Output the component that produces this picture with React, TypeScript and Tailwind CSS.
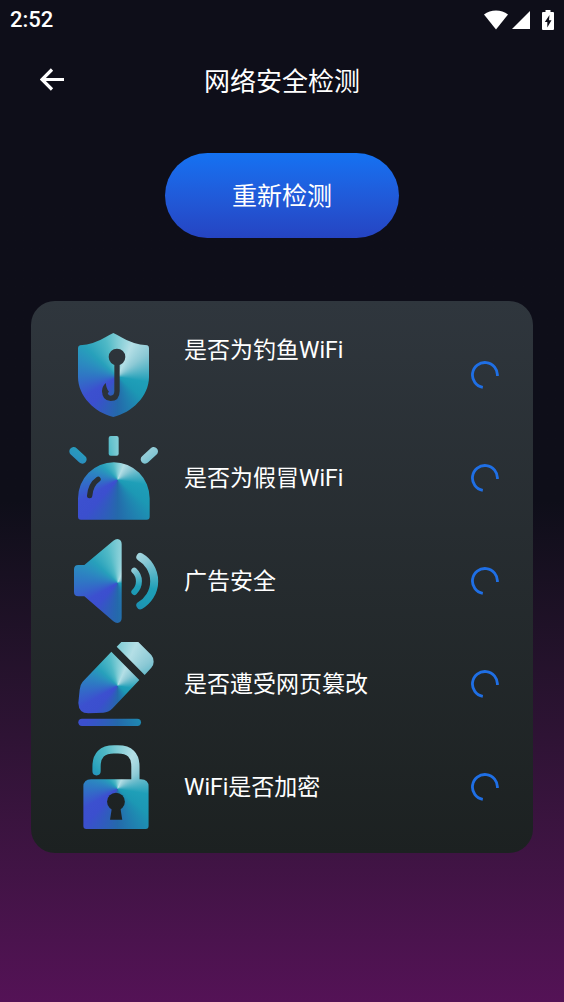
import React from 'react';

interface IconProps {
  id: string;
  viewBox: string;
  children: React.ReactNode;
}

// Children are drawn as a mask over a shared conic gradient (white = visible, black = cut out)
const GradientIcon: React.FC<IconProps> = ({ id, viewBox, children }) => {
  const [x, y, width, height] = viewBox.split(' ').map(Number);

  return (
    <svg className="w-[90px] h-[84px] shrink-0" viewBox={viewBox} fill="none" aria-hidden="true">
      <mask id={id} maskUnits="userSpaceOnUse" x={x} y={y} width={width} height={height}>
        {children}
      </mask>
      <g mask={`url(#${id})`}>
        <foreignObject x={x} y={y} width={width} height={height}>
          <div className="w-full h-full bg-[conic-gradient(at_54%_52%,#7fccd5_0deg,#b4dfe6_24deg,#8cc9d5_52deg,#1f9fb8_100deg,#1c98b4_130deg,#2469ab_180deg,#3b4fce_222deg,#3c50cf_240deg,#2f76c4_272deg,#27a0bb_312deg,#4fb9c6_342deg,#7fccd5_360deg)]" />
        </foreignObject>
      </g>
    </svg>
  );
};

const PhishingIcon = () => (
  <GradientIcon id="phishing" viewBox="27 36 270 252">
    <path
      fill="white"
      d="M160 36Q172 41 184 49Q218 70 262 73Q267 75 267 81V168C267 226 215 275 160 288C105 275 54 226 54 168V81Q54 75 60 73Q102 70 136 49Q148 41 160 36Z"
    />
    <circle cx="171" cy="108" r="25" fill="black" />
    <path stroke="black" strokeWidth="16" d="M171 120V210Q171 232 152 232Q134 232 134 208" />
    <path fill="black" d="M126 214Q125 196 138 186Q137 200 147 212L142 218Z" />
  </GradientIcon>
);

const AlarmIcon = () => (
  <GradientIcon id="alarm" viewBox="27 33 270 252">
    <path fill="white" d="M54 275V220A107 108 0 0 1 269 220V275Q269 284 260 284H63Q54 284 54 275Z" />
    <rect x="146" y="33" width="30" height="59" rx="6" fill="white" />
    <path stroke="white" strokeWidth="26" strokeLinecap="round" d="M41 79L67 103M281 79L255 103" />
    <path stroke="black" strokeWidth="16" strokeLinecap="round" d="M89 212Q92 178 114 163" />
  </GradientIcon>
);

const SpeakerIcon = () => (
  <GradientIcon id="speaker" viewBox="27 27 270 252">
    <path
      fill="white"
      d="M42 118Q42 105 55 105H73L160 32Q166 27 172 27Q185 28 185 42V264Q185 278 172 279Q166 279 160 274L73 199H55Q42 199 42 186Z"
    />
    <path stroke="white" strokeWidth="18" strokeLinecap="round" d="M223 122A44 44 0 0 1 223 186" />
    <path stroke="white" strokeWidth="24" strokeLinecap="round" d="M241 81A84 84 0 0 1 241 226" />
  </GradientIcon>
);

const PencilIcon = () => (
  <GradientIcon id="pencil" viewBox="27 27 270 252">
    <path fill="white" d="M154 56L238 141L158 226Q145 239 130 239L85 241Q56 241 55 210L59 170Q60 155 68 146Z" />
    <path fill="white" d="M170 41L184 27H235L274 66Q281 74 281 86Q281 97 274 104L254 126Z" />
    <rect x="55" y="257" width="188" height="22" rx="11" fill="white" />
  </GradientIcon>
);

const LockIcon = () => (
  <GradientIcon id="lock" viewBox="27 27 270 255">
    <path fill="white" d="M69 154Q69 131 92 131H244Q267 131 267 154V273Q267 282 258 282H78Q69 282 69 273Z" />
    <path
      stroke="white"
      strokeWidth="25"
      strokeLinecap="round"
      d="M109 107V92Q109 40 162 40H174Q227 40 227 92V140"
    />
    <circle cx="168" cy="199" r="27" fill="black" />
    <path fill="black" d="M156 215L150 254H187L181 215Z" />
  </GradientIcon>
);

const Spinner = () => (
  <svg className="w-7 h-7 shrink-0" viewBox="0 0 28 28" fill="none" role="status" aria-label="检测中">
    <path d="M26.4 15A12.5 12.5 0 1 0 11.8 26.3" stroke="#1f6fe5" strokeWidth="2.8" />
  </svg>
);

const checks = [
  { label: '是否为钓鱼WiFi', icon: <PhishingIcon />, labelClass: 'self-start' },
  { label: '是否为假冒WiFi', icon: <AlarmIcon />, labelClass: '' },
  { label: '广告安全', icon: <SpeakerIcon />, labelClass: '' },
  { label: '是否遭受网页篡改', icon: <PencilIcon />, labelClass: '' },
  { label: 'WiFi是否加密', icon: <LockIcon />, labelClass: '' },
];

const StatusBar = () => (
  <div className="h-10 px-2.5 flex items-center justify-between">
    <span className="text-[22px] leading-10 font-medium">2:52</span>
    <div className="flex items-center">
      <svg className="w-6 h-5" viewBox="0 0 24 20" fill="currentColor" aria-hidden="true">
        <path d="M0 4.5C3.5 1.8 7.5.5 12 .5S20.500 1.800 24 4.500L12 19.500Z" />
      </svg>
      <svg className="w-[18px] h-[18px] ml-1" viewBox="0 0 18 18" fill="currentColor" aria-hidden="true">
        <path d="M18 0V18H0Z" />
      </svg>
      <svg className="w-3 h-5 ml-3" viewBox="0 0 12 20" fill="currentColor" aria-hidden="true">
        <path
          fillRule="evenodd"
          d="M3.500 0H8.500V2H11Q12 2 12 3V19Q12 20 11 20H1Q0 20 0 19V3Q0 2 1 2H3.500ZM7.500 5L2.800 12H5.300V17.500L9.500 10.200H7Z"
        />
      </svg>
    </div>
  </div>
);

const App: React.FC = () => {
  return (
    <div className="min-h-screen text-white bg-linear-to-b from-[#0e0e19] from-50% to-[#541256] font-['Roboto','Noto_Sans_CJK_SC',sans-serif]">
      <StatusBar />

      <header className="h-20 px-9 grid grid-cols-[1fr_auto_1fr] items-center">
        <button type="button" aria-label="返回" className="w-8 h-8 flex items-center justify-center">
          <svg className="w-6 h-6" viewBox="0 0 24 24" fill="none" stroke="currentColor" strokeWidth="3.2" aria-hidden="true">
            <path d="M24 11.500H2.500M12 1.500L2 11.500L12 21.500" />
          </svg>
        </button>
        <h1 className="pt-1 text-[26px] leading-10">网络安全检测</h1>
      </header>

      <main className="pt-[33px] pb-10 px-[31px] flex flex-col items-center">
        <button
          type="button"
          className="h-[85px] px-[67px] pt-0.5 rounded-full bg-linear-to-b from-[#1472f2] to-[#2544c2] text-[25px] leading-10"
        >
          重新检测
        </button>

        <ul className="mt-[63px] w-full pt-8 pb-6 pl-[38px] pr-[34px] flex flex-col gap-[19px] rounded-3xl bg-linear-to-b from-[#2f363d] to-[#1c2121]">
          {checks.map(({ label, icon, labelClass }) => (
            <li key={label} className="flex items-center">
              {icon}
              <span className={`ml-[25px] pt-0.5 flex-1 text-[23px] leading-8 ${labelClass}`}>{label}</span>
              <Spinner />
            </li>
          ))}
        </ul>
      </main>
    </div>
  );
};

export default App;
